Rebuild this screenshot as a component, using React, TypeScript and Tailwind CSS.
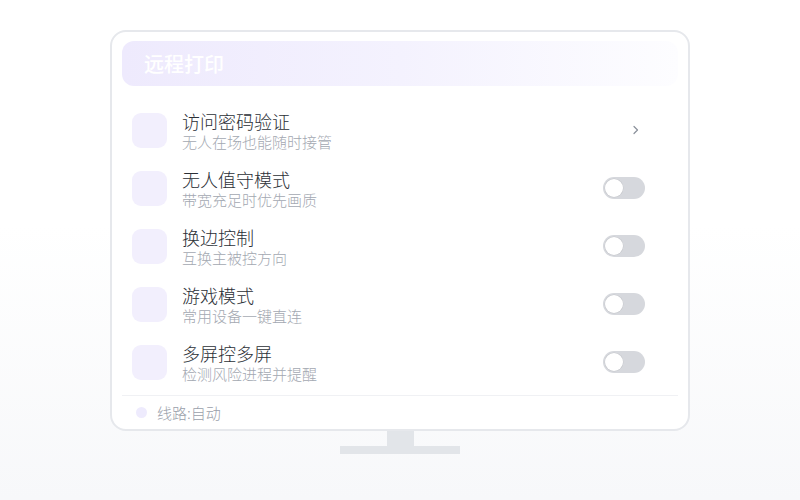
import React from "react";

const rows = [
  { title: "访问密码验证", sub: "无人在场也能随时接管", chevron: true },
  { title: "无人值守模式", sub: "带宽充足时优先画质" },
  { title: "换边控制", sub: "互换主被控方向" },
  { title: "游戏模式", sub: "常用设备一键直连" },
  { title: "多屏控多屏", sub: "检测风险进程并提醒" },
];

function Toggle() {
  return (
    <div className="w-[42px] h-[22px] rounded-full bg-[#d6d8dd] flex items-center px-[2px]">
      <div className="w-[18px] h-[18px] rounded-full bg-white shadow-[0_0_0_0.5px_rgba(0,0,0,0.08)]" />
    </div>
  );
}

export default function App() {
  return (
    <div
      className="w-[800px] h-[500px] bg-gradient-to-b from-white from-45% to-[#f7f8fa] flex flex-col items-center pt-[30px]"
      style={{ fontFamily: '"Noto Sans CJK SC", "Noto Sans", sans-serif' }}
    >
      <div className="w-[580px] border-2 border-[#e6e8ec] rounded-[16px] bg-white pt-[9px] px-[10px]">
        <div className="h-[45px] rounded-[12px] bg-gradient-to-r from-[#eeeafd] via-[#f4f2fe] to-[#fdfdff] flex items-center pl-[22px]">
          <span className="text-[20px] text-white font-medium leading-none">远程打印</span>
        </div>
        <div className="mt-[15px]">
          {rows.map((r) => (
            <div key={r.title} className="h-[58px] flex items-center pl-[10px] pr-[33px]">
              <div className="w-[35px] h-[35px] rounded-[9px] bg-[#f2effd]" />
              <div className="ml-[15px] flex flex-col flex-1 mt-[3px] gap-[1px]">
                <span className="text-[18px] leading-[20px] font-light text-[#2b2f36]">{r.title}</span>
                <span className="text-[15px] leading-[20px] font-light text-[#a3a8b1]">{r.sub}</span>
              </div>
              {r.chevron ? (
                <div className="w-[42px] flex justify-end pr-[5px]">
                  <svg width="8" height="10" viewBox="0 0 8 10" fill="none">
                    <path d="M2 1.5 L5.5 5 L2 8.5" stroke="#8a909a" strokeWidth="1.2" strokeLinecap="round" strokeLinejoin="round" />
                  </svg>
                </div>
              ) : (
                <Toggle />
              )}
            </div>
          ))}
        </div>
        <div className="mt-[4px] border-t border-[#f0f1f4] h-[34px] flex items-center pl-[14px]">
          <div className="w-[11px] h-[11px] rounded-full bg-[#eeebfd]" />
          <span className="ml-[10px] text-[15px] font-light text-[#9aa0aa] leading-none">线路:自动</span>
        </div>
      </div>
      <div className="w-[27px] h-[15px] bg-[#e2e5e9]" />
      <div className="w-[120px] h-[8px] bg-[#e2e5e9]" />
    </div>
  );
}
